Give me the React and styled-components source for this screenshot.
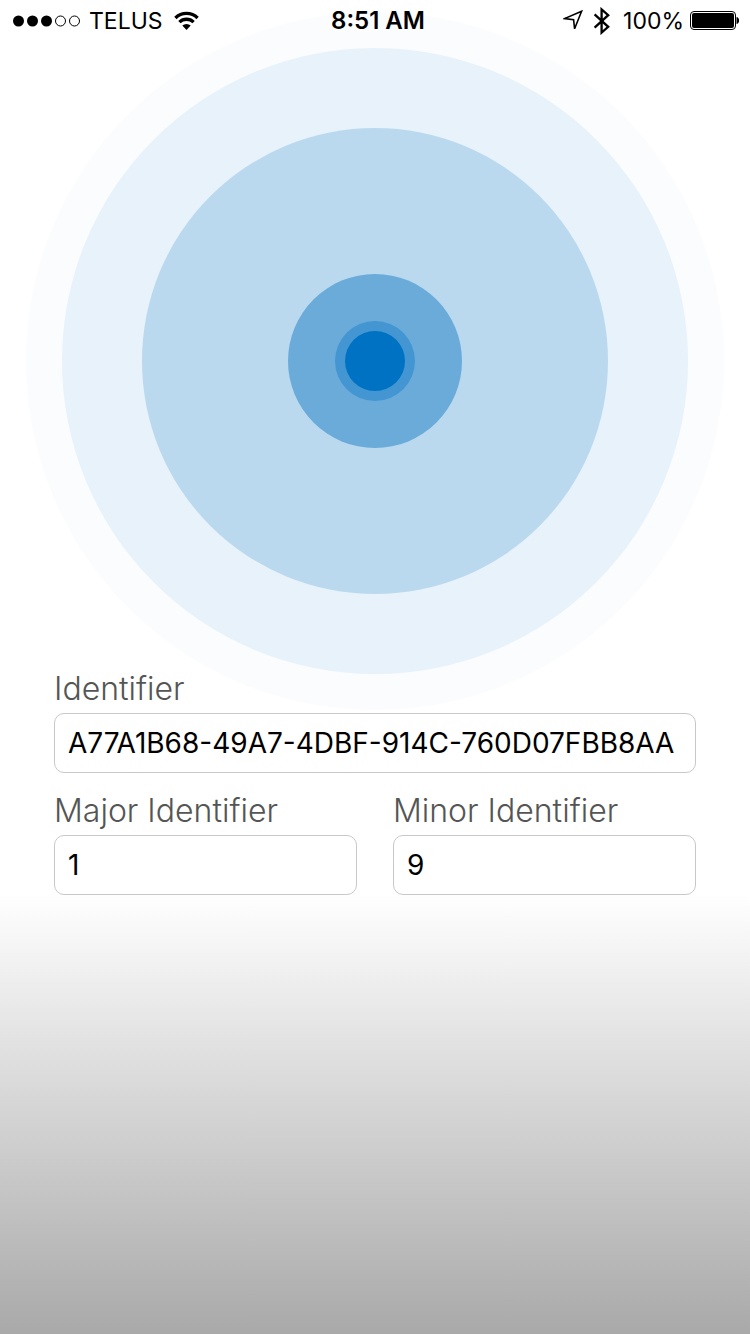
import React from "react";
import styled, { createGlobalStyle } from "styled-components";

const GlobalStyle = createGlobalStyle`
  *, *::before, *::after { box-sizing: border-box; }
  body {
    margin: 0;
    font-family: Inter, Roboto, "Liberation Sans", sans-serif;
    color: #000;
    background: #fff;
  }
`;

const Screen = styled.main`
  display: flex;
  flex-direction: column;
  min-height: 100vh;
  overflow: hidden;
  background: linear-gradient(#fff 0%, #fff 67%, #a9a9a9 100%);
`;

const StatusBar = styled.header`
  position: relative;
  z-index: 1;
  display: grid;
  grid-template-columns: 1fr auto 1fr;
  align-items: center;
  height: 42px;
  padding: 0 11px 0 13px;
  font-size: 23px;
  line-height: 42px;
  white-space: nowrap;
`;

const StatusGroup = styled.div`
  display: flex;
  align-items: center;
  justify-content: ${({ $end }) => ($end ? "flex-end" : "flex-start")};
`;

const Carrier = styled.span`
  margin: 0 11px 0 8px;
`;

const Clock = styled.time`
  padding-left: 4px;
  font-size: 24px;
  font-weight: 600;
`;

const Indicators = styled.div`
  display: flex;
  align-items: center;
  gap: 10px;
`;

const Charge = styled.span`
  margin: 0 6px 0 12px;
`;

const Icon = styled.svg`
  display: block;
  flex: none;
`;

const Radar = styled.svg`
  display: block;
  width: 100%;
  overflow: visible;
`;

const Form = styled.form`
  position: relative;
  display: grid;
  grid-template-columns: 1fr 1fr;
  column-gap: 36px;
  row-gap: 18px;
  padding: 0 54px 54px;
`;

const Field = styled.div`
  display: flex;
  flex-direction: column;
  gap: 4px;
  min-width: 0;
  grid-column: ${({ $wide }) => ($wide ? "1 / -1" : "auto")};
`;

const Label = styled.label`
  font-size: 32px;
  font-weight: 300;
  line-height: 40px;
  color: #555;
`;

const TextInput = styled.input`
  width: 100%;
  height: 60px;
  padding: 0 13px;
  border: 1px solid #c8c8c8;
  border-radius: 10px;
  background: #fff;
  color: #000;
  font-family: inherit;
  font-size: 28px;
  outline: none;
`;

const RINGS = [
  { r: 349, fill: "#fbfcfe" },
  { r: 313, fill: "#e7f2fa" },
  { r: 233, fill: "#bbd9ee" },
  { r: 87, fill: "#6aabda" },
  { r: 40, fill: "#4396d2" },
  { r: 30, fill: "#0072c3" },
];

const SIGNAL = [true, true, true, false, false];

function SignalDots() {
  return (
    <Icon width="68" height="12" viewBox="0 0 68 12" role="img" aria-label="Signal strength">
      {SIGNAL.map((on, i) => (
        <circle
          key={i}
          cx={5.5 + i * 14}
          cy="6"
          r={on ? 5.5 : 5}
          fill={on ? "#000" : "none"}
          stroke={on ? "none" : "#000"}
        />
      ))}
    </Icon>
  );
}

function WifiIcon() {
  return (
    <Icon width="25" height="20" viewBox="0 0 25 20" role="img" aria-label="Wi-Fi">
      <g fill="none" stroke="#000" strokeWidth="3.3">
        <path d="M1.4 7a15.7 15.7 0 0 1 22.2 0" />
        <path d="M5.4 11.2a10 10 0 0 1 14.2 0" />
      </g>
      <path d="M12.5 19 8.3 14.6a6 6 0 0 1 8.4 0Z" />
    </Icon>
  );
}

function LocationIcon() {
  return (
    <Icon width="20" height="22" viewBox="0 0 20 22" role="img" aria-label="Location">
      <path d="M18.6 1.2 1.6 8.6l9 1 1 9.2Z" fill="none" stroke="#000" strokeWidth="1.6" />
    </Icon>
  );
}

function BluetoothIcon() {
  return (
    <Icon width="18" height="28" viewBox="0 0 18 28" role="img" aria-label="Bluetooth">
      <path
        d="M1.6 7.4 15.2 19.8 8.6 25.6V2.4L15.2 8.2 1.6 20.6"
        fill="none"
        stroke="#000"
        strokeWidth="2.3"
      />
    </Icon>
  );
}

function BatteryIcon() {
  return (
    <Icon width="49" height="20" viewBox="0 0 49 20" role="img" aria-label="Battery full">
      <rect x=".5" y=".5" width="45" height="18" rx="3.5" fill="none" stroke="#000" />
      <rect x="2" y="2" width="42" height="15" rx="2" />
      <path d="M46.5 6c3.4.6 3.4 6.4 0 7Z" />
    </Icon>
  );
}

export default function App() {
  return (
    <>
      <GlobalStyle />
      <Screen>
        <StatusBar>
          <StatusGroup>
            <SignalDots />
            <Carrier>TELUS</Carrier>
            <WifiIcon />
          </StatusGroup>
          <Clock>8:51 AM</Clock>
          <StatusGroup $end>
            <Indicators>
              <LocationIcon />
              <BluetoothIcon />
            </Indicators>
            <Charge>100%</Charge>
            <BatteryIcon />
          </StatusGroup>
        </StatusBar>
        <Radar viewBox="0 0 750 627" aria-hidden="true">
          {RINGS.map(({ r, fill }) => (
            <circle key={r} cx="375" cy="319" r={r} fill={fill} />
          ))}
        </Radar>
        <Form onSubmit={(e) => e.preventDefault()}>
          <Field $wide>
            <Label htmlFor="identifier">Identifier</Label>
            <TextInput id="identifier" defaultValue="A77A1B68-49A7-4DBF-914C-760D07FBB8AA" />
          </Field>
          <Field>
            <Label htmlFor="major">Major Identifier</Label>
            <TextInput id="major" inputMode="numeric" defaultValue="1" />
          </Field>
          <Field>
            <Label htmlFor="minor">Minor Identifier</Label>
            <TextInput id="minor" inputMode="numeric" defaultValue="9" />
          </Field>
        </Form>
      </Screen>
    </>
  );
}
